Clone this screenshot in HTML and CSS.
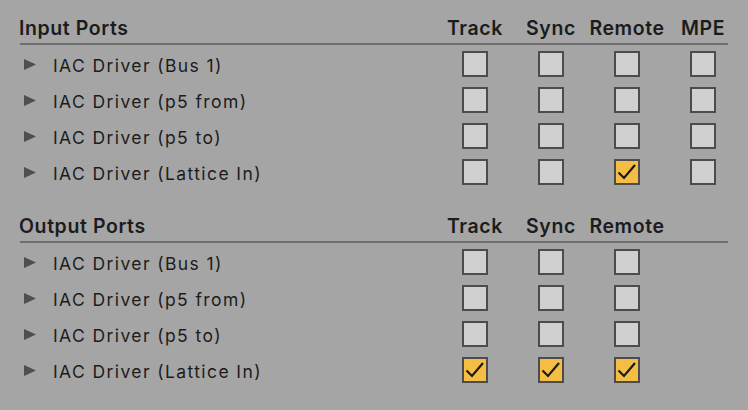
FILE: index.html
```html
<!DOCTYPE html>
<html>
<head>
<meta charset="utf-8">
<link rel="stylesheet" href="styles.css">
</head>
<body>
<div class="page">
  <section class="section">
    <div class="head">
      <div class="title">Input Ports</div>
      <div class="col">Track</div>
      <div class="col">Sync</div>
      <div class="col">Remote</div>
      <div class="col">MPE</div>
    </div>
    <div class="rows">
      <div class="row">
        <div class="name"><svg class="tri" width="12" height="11" viewBox="0 0 12 11"><polygon points="0,0 12,5.5 0,11"/></svg><span>IAC Driver (Bus 1)</span></div>
        <div class="cell"><span class="box"></span></div>
        <div class="cell"><span class="box"></span></div>
        <div class="cell"><span class="box"></span></div>
        <div class="cell"><span class="box"></span></div>
      </div>
      <div class="row">
        <div class="name"><svg class="tri" width="12" height="11" viewBox="0 0 12 11"><polygon points="0,0 12,5.5 0,11"/></svg><span>IAC Driver (p5 from)</span></div>
        <div class="cell"><span class="box"></span></div>
        <div class="cell"><span class="box"></span></div>
        <div class="cell"><span class="box"></span></div>
        <div class="cell"><span class="box"></span></div>
      </div>
      <div class="row">
        <div class="name"><svg class="tri" width="12" height="11" viewBox="0 0 12 11"><polygon points="0,0 12,5.5 0,11"/></svg><span>IAC Driver (p5 to)</span></div>
        <div class="cell"><span class="box"></span></div>
        <div class="cell"><span class="box"></span></div>
        <div class="cell"><span class="box"></span></div>
        <div class="cell"><span class="box"></span></div>
      </div>
      <div class="row">
        <div class="name"><svg class="tri" width="12" height="11" viewBox="0 0 12 11"><polygon points="0,0 12,5.5 0,11"/></svg><span>IAC Driver (Lattice In)</span></div>
        <div class="cell"><span class="box"></span></div>
        <div class="cell"><span class="box"></span></div>
        <div class="cell"><span class="box on"><svg width="22" height="22" viewBox="0 0 22 22"><path d="M2.5 11.5 L8 17 L19 4"/></svg></span></div>
        <div class="cell"><span class="box"></span></div>
      </div>
    </div>
  </section>

  <section class="section">
    <div class="head">
      <div class="title">Output Ports</div>
      <div class="col">Track</div>
      <div class="col">Sync</div>
      <div class="col">Remote</div>
      <div class="col"></div>
    </div>
    <div class="rows">
      <div class="row">
        <div class="name"><svg class="tri" width="12" height="11" viewBox="0 0 12 11"><polygon points="0,0 12,5.5 0,11"/></svg><span>IAC Driver (Bus 1)</span></div>
        <div class="cell"><span class="box"></span></div>
        <div class="cell"><span class="box"></span></div>
        <div class="cell"><span class="box"></span></div>
        <div class="cell"></div>
      </div>
      <div class="row">
        <div class="name"><svg class="tri" width="12" height="11" viewBox="0 0 12 11"><polygon points="0,0 12,5.5 0,11"/></svg><span>IAC Driver (p5 from)</span></div>
        <div class="cell"><span class="box"></span></div>
        <div class="cell"><span class="box"></span></div>
        <div class="cell"><span class="box"></span></div>
        <div class="cell"></div>
      </div>
      <div class="row">
        <div class="name"><svg class="tri" width="12" height="11" viewBox="0 0 12 11"><polygon points="0,0 12,5.5 0,11"/></svg><span>IAC Driver (p5 to)</span></div>
        <div class="cell"><span class="box"></span></div>
        <div class="cell"><span class="box"></span></div>
        <div class="cell"><span class="box"></span></div>
        <div class="cell"></div>
      </div>
      <div class="row">
        <div class="name"><svg class="tri" width="12" height="11" viewBox="0 0 12 11"><polygon points="0,0 12,5.5 0,11"/></svg><span>IAC Driver (Lattice In)</span></div>
        <div class="cell"><span class="box on"><svg width="22" height="22" viewBox="0 0 22 22"><path d="M2.5 11.5 L8 17 L19 4"/></svg></span></div>
        <div class="cell"><span class="box on"><svg width="22" height="22" viewBox="0 0 22 22"><path d="M2.5 11.5 L8 17 L19 4"/></svg></span></div>
        <div class="cell"><span class="box on"><svg width="22" height="22" viewBox="0 0 22 22"><path d="M2.5 11.5 L8 17 L19 4"/></svg></span></div>
        <div class="cell"></div>
      </div>
    </div>
  </section>
</div>
</body>
</html>
```

FILE: styles.css
```css
html, body {
  margin: 0;
  padding: 0;
  background: #a5a5a5;
}
body {
  width: 748px;
  height: 410px;
  overflow: hidden;
  font-family: Inter, "Liberation Sans", sans-serif;
  color: #1c1c1c;
}
.page {
  display: flex;
  flex-direction: column;
  gap: 9px;
  padding: 1px 20px 0;
  width: 708px;
}
.head {
  display: grid;
  grid-template-columns: 1fr repeat(4, 50px);
  column-gap: 26px;
  align-items: end;
  height: 44px;
  box-sizing: border-box;
  padding-bottom: 3px;
  border-bottom: 2px solid #6e6e6e;
  font-size: 19.5px;
  font-weight: 600;
  letter-spacing: 0.6px;
  line-height: 24px;
}
.title {
  margin-left: -1px;
}
.col {
  display: flex;
  justify-content: center;
  white-space: nowrap;
}
.rows {
  padding-top: 1px;
  display: flex;
  flex-direction: column;
}
.row {
  display: grid;
  grid-template-columns: 1fr repeat(4, 50px);
  column-gap: 26px;
  align-items: center;
  height: 36px;
}
.name {
  display: flex;
  align-items: center;
  gap: 17px;
  padding-left: 4px;
  padding-top: 3px;
  font-size: 17.5px;
  font-weight: 400;
  letter-spacing: 1.4px;
  white-space: nowrap;
}
.tri {
  fill: #4f4f4f;
  flex: none;
  margin-top: -2px;
}
.cell {
  display: flex;
  justify-content: center;
}
.box {
  width: 22px;
  height: 22px;
  border: 2px solid #4c4c4c;
  background: #d0d0d0;
  display: block;
}
.box.on {
  background: #f4bd43;
}
.box svg {
  display: block;
}
.box path {
  fill: none;
  stroke: #1a1a1a;
  stroke-width: 2.2;
}
```
